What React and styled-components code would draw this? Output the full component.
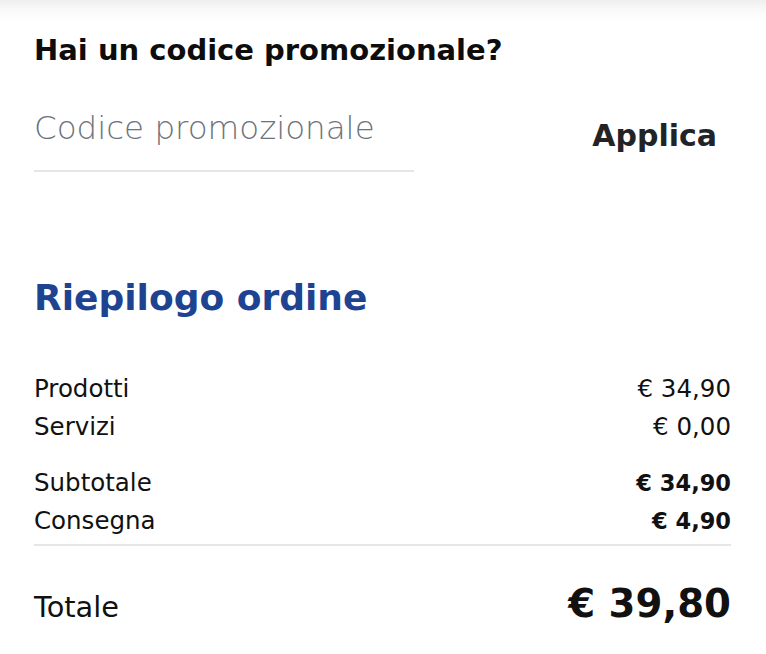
import React from "react";
import styled, { createGlobalStyle } from "styled-components";

const GlobalStyle = createGlobalStyle`
  html, body { margin: 0; padding: 0; background: #fff; }
  body { font-family: "DejaVu Sans", sans-serif; color: #111; }
  * { box-sizing: border-box; }
`;

const Page = styled.div`
  width: 766px;
  min-height: 654px;
  padding: 33px 35px 0 34px;
  background: linear-gradient(#efefef 0px, #f9f9f9 10px, #fff 22px);
`;

const Heading = styled.h2`
  margin: 0;
  font-size: 29px;
  line-height: 34px;
  font-weight: 700;
  color: #0d0d0d;
`;

const PromoRow = styled.div`
  display: flex;
  align-items: flex-start;
  justify-content: space-between;
  margin-top: 41px;
`;

const PromoField = styled.div`
  width: 380px;
  padding-bottom: 22px;
  border-bottom: 2px solid #e4e6e9;
`;

const PromoInput = styled.input`
  display: block;
  width: 100%;
  height: 40px;
  line-height: 40px;
  border: none;
  padding: 0;
  font-family: inherit;
  font-size: 32.5px;
  font-weight: 200;
  color: #333;
  outline: none;
  background: transparent;
  &::placeholder { color: #6c737b; }
`;

const ApplyButton = styled.button`
  margin-top: 10px;
  border: none;
  background: none;
  padding: 0 14px 0 0;
  font-family: inherit;
  font-size: 30px;
  line-height: 36px;
  font-weight: 700;
  color: #222326;
  cursor: pointer;
`;

const SummaryTitle = styled.h2`
  margin: 104px 0 0 0;
  font-size: 36px;
  line-height: 44px;
  font-weight: 700;
  color: #1e4391;
`;

const Lines = styled.div`
  margin-top: 53px;
  display: flex;
  flex-direction: column;
`;

const Group = styled.div`
  display: flex;
  flex-direction: column;
  gap: 6px;
  & + & { margin-top: 24px; }
`;

const Line = styled.div`
  display: flex;
  justify-content: space-between;
  align-items: baseline;
  line-height: 32px;
`;

const Label = styled.span`
  font-size: 24.5px;
  font-weight: 400;
  color: #111;
`;

const Amount = styled.span`
  font-size: ${(p) => (p.$bold ? "22.5px" : "24.5px")};
  font-weight: ${(p) => (p.$bold ? 700 : 400)};
  color: #111;
`;

const Divider = styled.hr`
  border: none;
  border-top: 2px solid #e6e6e6;
  margin: 7px 0 0 0;
`;

const TotalRow = styled.div`
  display: flex;
  justify-content: space-between;
  align-items: baseline;
  margin-top: 35px;
`;

const TotalLabel = styled.span`
  font-size: 28.8px;
  line-height: 34px;
  font-weight: 400;
`;

const TotalAmount = styled.span`
  font-size: 38.7px;
  line-height: 46px;
  font-weight: 700;
`;

export default function App() {
  return (
    <>
      <GlobalStyle />
      <Page>
        <Heading>Hai un codice promozionale?</Heading>
        <PromoRow>
          <PromoField>
            <PromoInput placeholder="Codice promozionale" />
          </PromoField>
          <ApplyButton>Applica</ApplyButton>
        </PromoRow>
        <SummaryTitle>Riepilogo ordine</SummaryTitle>
        <Lines>
          <Group>
            <Line><Label>Prodotti</Label><Amount>€ 34,90</Amount></Line>
            <Line><Label>Servizi</Label><Amount>€ 0,00</Amount></Line>
          </Group>
          <Group>
            <Line><Label>Subtotale</Label><Amount $bold>€ 34,90</Amount></Line>
            <Line><Label>Consegna</Label><Amount $bold>€ 4,90</Amount></Line>
          </Group>
          <Divider />
        </Lines>
        <TotalRow>
          <TotalLabel>Totale</TotalLabel>
          <TotalAmount>€ 39,80</TotalAmount>
        </TotalRow>
      </Page>
    </>
  );
}
